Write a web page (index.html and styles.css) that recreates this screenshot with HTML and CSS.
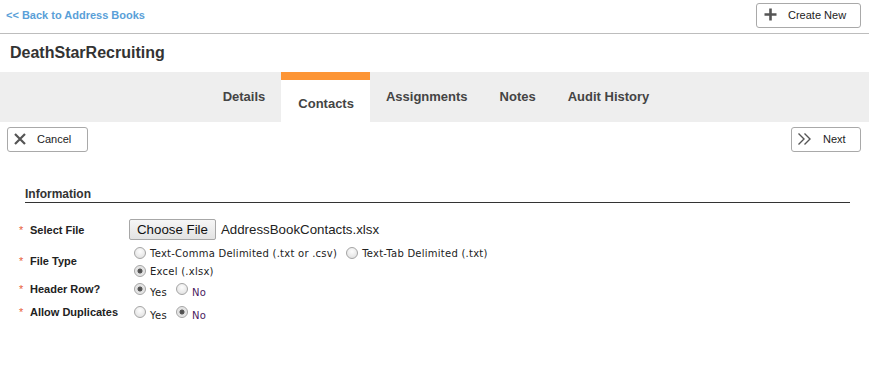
FILE: index.html
```html
<!DOCTYPE html>
<html>
<head>
<meta charset="utf-8">
<link rel="stylesheet" href="styles.css">
</head>
<body>
<div class="topbar">
  <a class="back" href="#">&lt;&lt; Back to Address Books</a>
  <button class="btn create">
    <svg width="13" height="13" viewBox="0 0 13 13"><path d="M6.5 0.5v12M0.5 6.5h12" stroke="#555" stroke-width="2.6" fill="none"/></svg>
    <span>Create New</span>
  </button>
</div>
<h1 class="title">DeathStarRecruiting</h1>
<nav class="tabs">
  <a class="tab">Details</a>
  <a class="tab active">Contacts</a>
  <a class="tab">Assignments</a>
  <a class="tab">Notes</a>
  <a class="tab">Audit History</a>
</nav>
<div class="actions">
  <button class="btn cancel">
    <svg width="12" height="12" viewBox="0 0 12 12"><path d="M1 1l10 10M11 1L1 11" stroke="#555" stroke-width="2.2" fill="none"/></svg>
    <span>Cancel</span>
  </button>
  <button class="btn next">
    <svg width="16" height="14" viewBox="0 0 16 14"><path d="M1.5 1.5L7 7l-5.5 5.5M7.5 1.5L13 7l-5.5 5.5" stroke="#555" stroke-width="1.4" fill="none"/></svg>
    <span>Next</span>
  </button>
</div>
<section class="info">
  <h2 class="section-title">Information</h2>
  <div class="form">
    <div class="row row-file">
      <div class="label"><span class="req">*</span>Select File</div>
      <div class="control file">
        <span class="choose">Choose File</span>
        <span class="fname">AddressBookContacts.xlsx</span>
      </div>
    </div>
    <div class="row row-type">
      <div class="label"><span class="req">*</span>File Type</div>
      <div class="control radios">
        <div class="rline">
          <label class="opt"><input type="radio" name="ft"><span>Text-Comma Delimited (.txt or .csv)</span></label>
          <label class="opt"><input type="radio" name="ft"><span>Text-Tab Delimited (.txt)</span></label>
        </div>
        <div class="rline">
          <label class="opt"><input type="radio" name="ft" checked><span>Excel (.xlsx)</span></label>
        </div>
      </div>
    </div>
    <div class="row row-hdr">
      <div class="label"><span class="req">*</span>Header Row?</div>
      <div class="control rline">
        <label class="opt yn"><input type="radio" name="hr" checked><span>Yes</span></label>
        <label class="opt yn"><input type="radio" name="hr"><span class="no">No</span></label>
      </div>
    </div>
    <div class="row row-dup">
      <div class="label"><span class="req">*</span>Allow Duplicates</div>
      <div class="control rline">
        <label class="opt yn"><input type="radio" name="ad"><span>Yes</span></label>
        <label class="opt yn"><input type="radio" name="ad" checked><span class="no">No</span></label>
      </div>
    </div>
  </div>
</section>
</body>
</html>
```

FILE: styles.css
```css
* { box-sizing: border-box; }
body {
  margin: 0;
  font-family: "Liberation Sans", Arial, sans-serif;
  color: #333;
  background: #fff;
}
.topbar {
  height: 34px;
  border-bottom: 1px solid #bdbdbd;
  display: flex;
  justify-content: space-between;
  align-items: flex-start;
  padding: 3px 8px 0 6px;
}
.back {
  margin-top: 6px;
  font-size: 11px;
  font-weight: bold;
  color: #5a9fd8;
  text-decoration: none;
}
.btn {
  display: flex;
  align-items: center;
  background: #fff;
  border: 1px solid #a9a9a9;
  border-radius: 3px;
  height: 25px;
  font-family: "Liberation Sans", Arial, sans-serif;
  font-size: 11px;
  color: #222;
  padding: 0 0 2px 0;
}
.create { width: 105px; padding-left: 7px; }
.create span { margin-left: 11px; }
.title {
  margin: 0;
  height: 38px;
  line-height: 37px;
  padding-left: 10px;
  font-size: 16px;
  font-weight: bold;
  color: #333;
}
.tabs {
  height: 50px;
  background: #eeeeee;
  display: flex;
  justify-content: center;
  padding-left: 3px;
}
.tab {
  display: flex;
  align-items: center;
  padding: 0 16px 2px 16px;
  font-size: 13px;
  font-weight: bold;
  color: #444;
}
.tab.active {
  background: #fff;
  border-top: 8px solid #fd9535;
  padding: 5px 16px 0 17px;
}
.actions {
  display: flex;
  justify-content: space-between;
  padding: 5px 8px 0 7px;
}
.cancel { width: 81px; padding-left: 6px; }
.cancel span { margin-left: 11px; }
.next { width: 70px; padding-left: 5px; }
.next span { margin-left: 10px; }
.info {
  margin: 36px 19px 0 25px;
}
.section-title {
  margin: 0;
  font-size: 12px;
  font-weight: bold;
  color: #333;
  padding-bottom: 2px;
  border-bottom: 1px solid #333;
  line-height: 12px;
}
.form {
  margin-left: -6px;
  padding-top: 16px;
}
.row {
  display: flex;
  align-items: center;
}
.label {
  width: 110px;
  font-size: 11px;
  font-weight: bold;
  color: #222;
  display: flex;
  align-items: center;
}
.req {
  color: #e8603a;
  width: 11px;
  font-weight: normal;
  font-size: 11px;
}
.control.file {
  display: flex;
  align-items: center;
  height: 21px;
}
.choose {
  display: inline-block;
  height: 21px;
  line-height: 19px;
  padding: 0 7px;
  border: 1px solid #a7a7a7;
  border-radius: 2px;
  background: linear-gradient(#f6f6f6, #e3e3e3);
  font-size: 13.3px;
  color: #111;
}
.fname {
  margin-left: 5px;
  font-size: 13.3px;
  color: #222;
}
.row-type { margin-top: 4px; }
.row-type .label { margin-top: -2px; }
.row-hdr { margin-top: 0; }
.row-dup { margin-top: 5px; }
.radios { display: flex; flex-direction: column; }
.rline {
  display: flex;
  align-items: center;
  height: 18px;
}
.opt {
  display: flex;
  align-items: center;
  font-family: "DejaVu Sans", Verdana, sans-serif;
  font-size: 10px;
  letter-spacing: 0.25px;
  color: #222;
  margin-right: 4px;
}
.opt input {
  -webkit-appearance: none;
  appearance: none;
  width: 12px;
  height: 12px;
  margin: 0 4px 0 5px;
  border-radius: 50%;
  border: 1px solid #a4a4a4;
  background: radial-gradient(circle at 50% 35%, #fdfdfd, #dcdcdc);
}
.opt input:checked {
  background: radial-gradient(circle, #4a4a4a 0, #5a5a5a 2.2px, #dedede 2.8px, #f2f2f2 100%);
}
.yn span { position: relative; top: 3px; }
.yn .no { color: #4a2060; }
```
